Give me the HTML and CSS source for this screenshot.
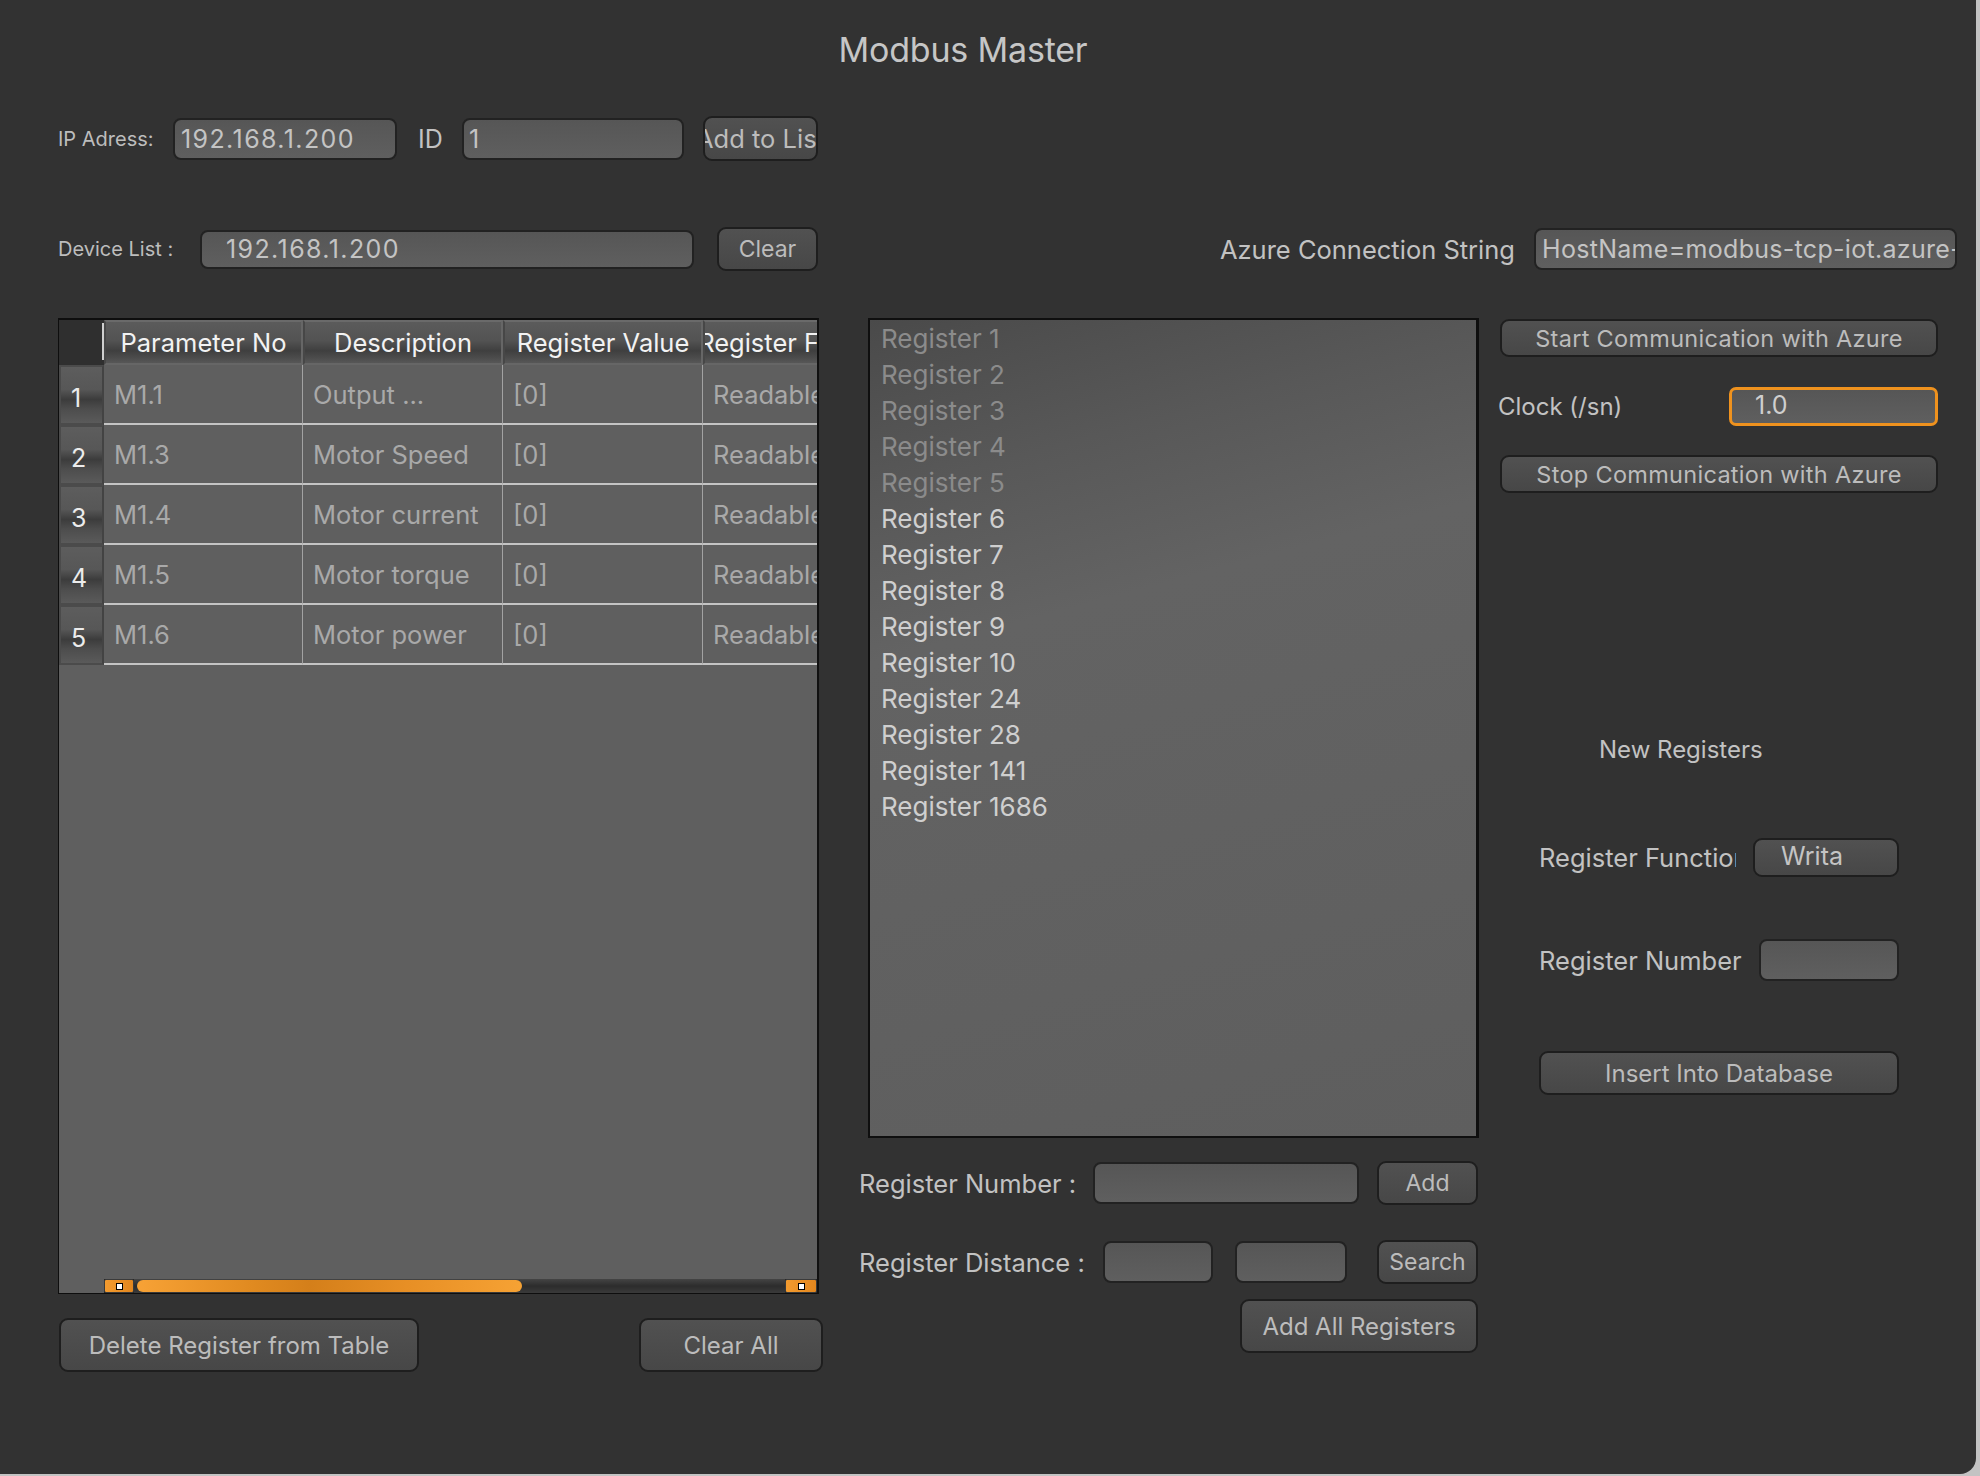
FILE: index.html
```html
<!DOCTYPE html>
<html lang="en">
<head>
<meta charset="utf-8">
<title>Modbus Master</title>
<link rel="stylesheet" href="styles.css">
</head>
<body>
<div class="window">
  <div class="title-bar"><h1 class="title">Modbus Master</h1></div>

  <div class="row row-ip">
    <span class="label small lbl-ip">IP Adress:</span>
    <div class="field f-ip">192.168.1.200</div>
    <span class="label lbl-id">ID</span>
    <div class="field f-id">1</div>
    <div class="btn b-addlist"><span>Add to List</span></div>
  </div>

  <div class="row row-device">
    <span class="label small lbl-dev">Device List :</span>
    <div class="field f-dev">192.168.1.200</div>
    <div class="btn b-clear"><span>Clear</span></div>
    <span class="label lbl-azure">Azure Connection String</span>
    <div class="field f-azure">HostName=modbus-tcp-iot.azure-devices.net</div>
  </div>

  <div class="main">
    <div class="col col-left">
      <div class="table">
        <div class="trow thead">
          <div class="corner"><span class="corner-line"></span></div>
          <div class="th">Parameter No</div>
          <div class="th">Description</div>
          <div class="th">Register Value</div>
          <div class="th">Register Function</div>
        </div>
        <div class="trow">
          <div class="rn"><span>1</span></div>
          <div class="td">M1.1</div><div class="td">Output ...</div><div class="td">[0]</div><div class="td">Readable</div>
        </div>
        <div class="trow">
          <div class="rn"><span>2</span></div>
          <div class="td">M1.3</div><div class="td">Motor Speed</div><div class="td">[0]</div><div class="td">Readable</div>
        </div>
        <div class="trow">
          <div class="rn"><span>3</span></div>
          <div class="td">M1.4</div><div class="td">Motor current</div><div class="td">[0]</div><div class="td">Readable</div>
        </div>
        <div class="trow">
          <div class="rn"><span>4</span></div>
          <div class="td">M1.5</div><div class="td">Motor torque</div><div class="td">[0]</div><div class="td">Readable</div>
        </div>
        <div class="trow">
          <div class="rn"><span>5</span></div>
          <div class="td">M1.6</div><div class="td">Motor power</div><div class="td">[0]</div><div class="td">Readable</div>
        </div>
        <div class="tspacer"></div>
        <div class="hscroll">
          <div class="sb-btn"><span class="sb-dot"></span></div>
          <div class="sb-track">
            <div class="sb-thumb"></div>
          </div>
          <div class="sb-btn"><span class="sb-dot"></span></div>
        </div>
      </div>
      <div class="left-actions">
        <div class="btn b-delete"><span>Delete Register from Table</span></div>
        <div class="btn b-clearall"><span>Clear All</span></div>
      </div>
    </div>

    <div class="col col-mid">
      <div class="listbox">
        <div class="li dis">Register 1</div>
        <div class="li dis">Register 2</div>
        <div class="li dis">Register 3</div>
        <div class="li dis">Register 4</div>
        <div class="li dis">Register 5</div>
        <div class="li">Register 6</div>
        <div class="li">Register 7</div>
        <div class="li">Register 8</div>
        <div class="li">Register 9</div>
        <div class="li">Register 10</div>
        <div class="li">Register 24</div>
        <div class="li">Register 28</div>
        <div class="li">Register 141</div>
        <div class="li">Register 1686</div>
      </div>
      <div class="frow frow-num">
        <span class="label lbl-regnum">Register Number :</span>
        <div class="field f-regnum"></div>
        <div class="btn b-add"><span>Add</span></div>
      </div>
      <div class="frow frow-dist">
        <span class="label lbl-regdist">Register Distance :</span>
        <div class="field f-d1"></div>
        <div class="field f-d2"></div>
        <div class="btn b-search"><span>Search</span></div>
      </div>
      <div class="frow frow-all">
        <div class="btn b-addall"><span>Add All Registers</span></div>
      </div>
    </div>

    <div class="col col-right">
      <div class="btn b-azure b-start"><span>Start Communication with Azure</span></div>
      <div class="clock-row">
        <span class="label lbl-clock">Clock (/sn)</span>
        <div class="field f-clock">1.0</div>
      </div>
      <div class="btn b-azure b-stop"><span>Stop Communication with Azure</span></div>
      <div class="label new-reg">New Registers</div>
      <div class="nrow nrow-func">
        <span class="label lbl-func">Register Function</span>
        <div class="btn b-writa">Writa</div>
      </div>
      <div class="nrow nrow-num">
        <span class="label lbl-rnum">Register Number</span>
        <div class="field f-rnum"></div>
      </div>
      <div class="btn b-insert"><span>Insert Into Database</span></div>
    </div>
  </div>
</div>
</body>
</html>
```

FILE: styles.css
```css
* { box-sizing: border-box; }

html, body {
  margin: 0;
  padding: 0;
}

body {
  width: 1980px;
  height: 1476px;
  background: #c3c3c3;
  font-family: "Inter", "Liberation Sans", sans-serif;
  overflow: hidden;
}

.window {
  width: 1976px;
  height: 1474px;
  background: #323232;
  border-bottom-right-radius: 16px;
  padding-left: 58px;
  padding-right: 19px;
}

/* title */
.title-bar {
  height: 100px;
  display: flex;
  justify-content: center;
  padding-right: 89px;
}
.title {
  margin: 0;
  font-weight: 400;
  font-size: 34px;
  line-height: 100px;
  color: #c6c6c6;
  letter-spacing: -0.2px;
}

/* generic */
.label {
  color: #c2c2c2;
  font-size: 25.5px;
  white-space: nowrap;
}
.label.small {
  font-size: 20px;
  color: #bdbdbd;
}

.field {
  background: linear-gradient(#565656, #5f5f5f);
  border: 2px solid #222;
  border-radius: 8px;
  color: #c4c4c4;
  font-size: 25px;
  display: flex;
  align-items: center;
  white-space: nowrap;
  overflow: hidden;
  flex: none;
}

.btn {
  background: linear-gradient(#515151, #474747);
  border: 2px solid #1e1e1e;
  border-radius: 9px;
  color: #bcbcbc;
  font-size: 23px;
  display: flex;
  align-items: center;
  justify-content: center;
  white-space: nowrap;
  overflow: hidden;
  flex: none;
}
.btn > span { flex: none; }

/* row 1 */
.row {
  display: flex;
  align-items: center;
}
.row-ip {
  margin-top: 16px;
  height: 45px;
}
.lbl-ip { width: 115px; }
.f-ip { width: 224px; height: 42px; padding-left: 6px; letter-spacing: 1.4px; }
.lbl-id { margin-left: 21px; width: 44px; font-size: 25px; }
.f-id { width: 222px; height: 42px; padding-left: 5px; }
.b-addlist { margin-left: 19px; width: 115px; height: 45px; font-size: 25.5px; }

/* row 2 */
.row-device {
  margin-top: 66px;
  height: 44px;
}
.lbl-dev { width: 142px; }
.f-dev { width: 494px; height: 39px; padding-left: 24px; letter-spacing: 1.4px; }
.b-clear { margin-left: 23px; width: 101px; height: 44px; }
.lbl-azure { margin-left: auto; margin-right: 19px; }
.f-azure { width: 423px; height: 42px; padding-left: 6px; letter-spacing: 0.3px; }

/* main grid */
.main {
  margin-top: 47px;
  display: grid;
  grid-template-columns: 765px 620px 440px;
  column-gap: 36px;
}
.col-right { margin-left: -17px; width: 440px; }

/* table */
.table {
  width: 761px;
  height: 976px;
  background: #5f5f5f;
  border: 1px solid #0e0e0e;
  border-top-width: 2px;
  border-right: 2px solid #111;
  display: flex;
  flex-direction: column;
  overflow: hidden;
}
.trow {
  display: grid;
  grid-template-columns: 45px 199px 200px 200px 200px;
  height: 60px;
  flex: none;
}
.trow.thead { height: 45px; }
.corner {
  background: #2f2f2f;
  position: relative;
}
.corner-line {
  position: absolute;
  right: 0;
  top: 3px;
  bottom: 5px;
  width: 2px;
  background: #cfcfcf;
}
.th {
  background: linear-gradient(#5b5b5b 0%, #535353 45%, #3f3f3f 70%, #4a4a4a 85%, #575757 100%);
  border: 2px solid #666;
  border-top-color: #6a6a6a;
  border-left-color: #474747;
  color: #f2f2f2;
  font-size: 25.5px;
  display: flex;
  align-items: center;
  justify-content: center;
  white-space: nowrap;
  overflow: hidden;
}
.th:first-of-type { border-left-color: #666; }
.rn {
  background: linear-gradient(#5d5d5d 0%, #575757 40%, #3c3c3c 58%, #4d4d4d 75%, #5a5a5a 100%);
  border: 2px solid #4b4b4b;
  border-right-color: #434343;
  color: #ececec;
  font-size: 25px;
  display: flex;
  align-items: center;
  padding-left: 10px;
  padding-top: 6px;
}
.td {
  border-bottom: 2px solid #c4c4c4;
  border-right: 1px solid #a2a2a2;
  color: #a9a9a9;
  font-size: 25.5px;
  display: flex;
  align-items: center;
  padding-left: 10px;
  white-space: nowrap;
  overflow: hidden;
}
.tspacer { flex: 1; }

.hscroll {
  margin-left: 45px;
  height: 14px;
  display: flex;
  background: #262626;
  flex: none;
}
.sb-btn {
  width: 30px;
  height: 14px;
  background: linear-gradient(90deg, #f39b2f, #e2861e);
  border: 1px solid #3a3a3a;
  border-radius: 2px;
  display: flex;
  align-items: center;
  justify-content: center;
  flex: none;
}
.sb-btn:last-child { width: 32px; }
.sb-dot {
  width: 5px;
  height: 5px;
  background: #fff;
  border: 1.5px solid #000;
  box-sizing: content-box;
}
.sb-track {
  flex: 1;
  background: linear-gradient(#444 0%, #2c2c2c 50%, #3a3a3a 100%);
  padding: 1px 3px 1px 3px;
}
.sb-thumb {
  width: 385px;
  height: 12px;
  border-radius: 6px;
  background: linear-gradient(90deg, #f7a236 0%, #e08a20 30%, #d47f1a 45%, #e78f25 70%, #f6a234 100%);
}

.left-actions {
  margin-top: 24px;
  display: flex;
  justify-content: space-between;
}
.b-delete { margin-left: 1px; width: 360px; height: 54px; font-size: 24px; }
.b-clearall { width: 184px; height: 54px; font-size: 24px; }

/* middle list */
.listbox {
  margin-left: 9px;
  width: 611px;
  height: 820px;
  border: 2px solid #0f0f0f;
  border-right-width: 3px;
  background: linear-gradient(165deg, #4a4a4a 0%, #585858 18%, #636363 35%, #5e5e5e 100%);
  padding-top: 1px;
  padding-left: 11px;
}
.li {
  height: 36px;
  line-height: 36px;
  font-size: 26px;
  color: #cfcfcf;
}
.li.dis { color: #8b8b8b; }

.frow {
  display: flex;
  align-items: center;
  height: 44px;
}
.frow-num { margin-top: 23px; }
.lbl-regnum { width: 234px; }
.f-regnum { width: 266px; height: 42px; }
.b-add { margin-left: 18px; width: 101px; height: 44px; }
.frow-dist { margin-top: 35px; }
.lbl-regdist { width: 244px; }
.f-d1 { width: 110px; height: 42px; }
.f-d2 { margin-left: 22px; width: 112px; height: 42px; }
.b-search { margin-left: 30px; width: 101px; height: 44px; }
.frow-all {
  margin-top: 15px;
  height: 54px;
  justify-content: flex-end;
  padding-right: 1px;
}
.b-addall { width: 238px; height: 54px; font-size: 24px; }

/* right column */
.b-azure {
  margin-top: 1px;
  margin-left: 2px;
  width: 438px;
  height: 38px;
  font-size: 23.5px;
  letter-spacing: 0.3px;
}
.clock-row {
  margin-top: 30px;
  height: 39px;
  display: flex;
  align-items: center;
  justify-content: space-between;
}
.lbl-clock { font-size: 24px; }
.f-clock {
  width: 209px;
  height: 39px;
  border: 3px solid #ef921e;
  border-radius: 7px;
  padding-left: 23px;
  padding-bottom: 4px;
  color: #cfcfcf;
}
.b-stop { margin-top: 29px; }
.new-reg {
  margin-top: 242px;
  margin-left: 101px;
  height: 30px;
  line-height: 30px;
  font-size: 24px;
}
.nrow {
  display: flex;
  align-items: center;
  margin-left: 41px;
}
.nrow-func { margin-top: 73px; height: 39px; }
.lbl-func { width: 197px; overflow: hidden; }
.b-writa {
  margin-left: 17px;
  width: 146px;
  height: 39px;
  justify-content: flex-start;
  padding-left: 26px;
  padding-bottom: 4px;
  font-size: 25px;
  color: #c4c4c4;
}
.nrow-num { margin-top: 62px; height: 42px; }
.lbl-rnum { width: 220px; }
.f-rnum { width: 140px; height: 42px; }
.b-insert {
  margin-top: 70px;
  margin-left: 41px;
  width: 360px;
  height: 44px;
  font-size: 24px;
}
```
